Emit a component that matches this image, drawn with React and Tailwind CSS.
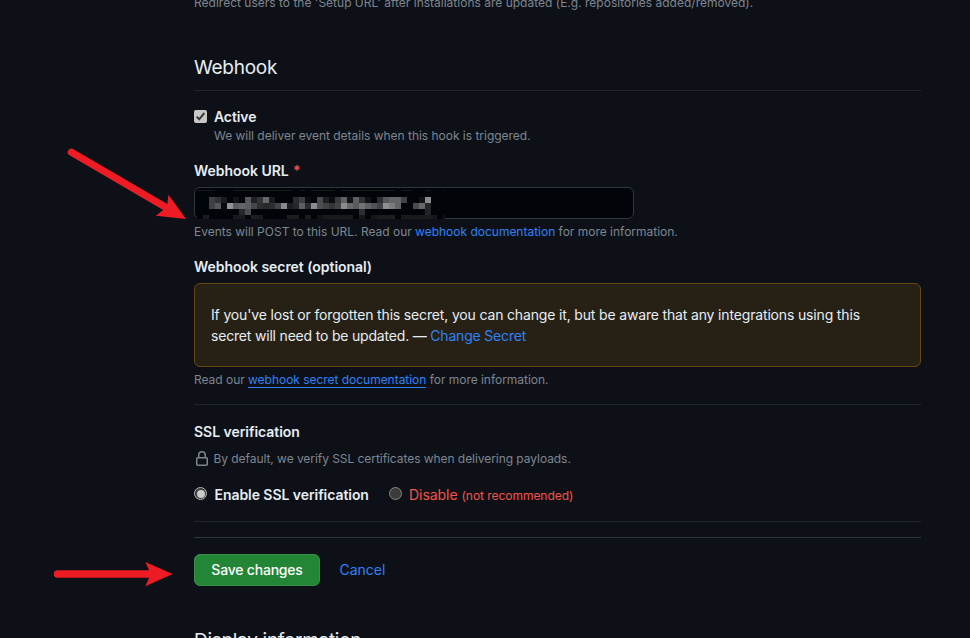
// Grey levels of the redacted URL, one row of 6px cells per entry.
const MOSAIC = [
  [0, 0, 61, 48, 26, 0, 17, 0, 87, 30, 50, 102, 26, 0, 0, 0, 41, 60, 12, 0, 72, 28, 12, 56, 96, 16, 92, 48, 16, 0, 44, 85, 98, 98, 64, 0, 0, 16, 138, 0, 0, 0],
  [0, 0, 64, 85, 8, 145, 91, 98, 92, 68, 44, 38, 44, 64, 136, 26, 36, 92, 42, 138, 76, 64, 51, 64, 138, 102, 88, 112, 96, 80, 64, 140, 122, 98, 0, 0, 72, 102, 37, 0, 0, 0],
  [0, 0, 0, 0, 0, 0, 0, 38, 74, 0, 0, 0, 0, 0, 0, 0, 0, 0, 0, 0, 0, 0, 0, 0, 0, 0, 0, 44, 0, 0, 0, 0, 0, 0, 0, 0, 0, 0, 34, 0, 0, 0],
  [0, 26, 0, 0, 0, 0, 24, 24, 0, 28, 26, 0, 0, 0, 0, 26, 26, 0, 26, 0, 16, 24, 24, 24, 24, 24, 0, 20, 0, 20, 26, 26, 28, 0, 24, 24, 24, 24, 26, 22, 0, 14],
];

// Faint row along the top of the redacted area.
const EDGE = [22, 22, 22, 0, 0, 0, 22, 22, 22, 22, 22, 22, 22, 22, 22, 22, 0, 22, 0, 22, 22, 22, 22, 0, 22, 22, 22, 22, 22, 22, 22, 22, 22, 0, 22, 22, 0, 0, 22, 0, 0, 14];

const shade = (v) => (v ? `rgb(${v}, ${v + 2}, ${v + 6})` : '#010409');

function Redacted() {
  return (
    <div className="ml-[2px] mt-[2px] h-[29px] w-[248px] overflow-hidden">
      <div className="mb-[6px] grid auto-rows-[1px] grid-cols-[repeat(42,6px)]">
        {EDGE.map((v, i) => (
          <div key={i} style={{ backgroundColor: shade(v) }} />
        ))}
      </div>
      <div className="grid auto-rows-[6px] grid-cols-[repeat(42,6px)]">
        {MOSAIC.flat().map((v, i) => (
          <div key={i} style={{ backgroundColor: shade(v) }} />
        ))}
      </div>
    </div>
  );
}

function Rule({ className }) {
  return <div className={`h-px bg-[#21262d] ${className}`} />;
}

export default function App() {
  return (
    <div className="relative h-[638px] w-[970px] overflow-hidden bg-[#0d1117] font-['Inter',sans-serif] text-[14px] tracking-[-0.04px] text-[#e6edf3]">
      <main className="flex w-[921px] flex-col pl-[194px]">
        <p className="-mt-[6px] h-[18px] whitespace-nowrap text-[12px] leading-[18px] tracking-[0.005px] text-[#7d8590]">
          Redirect users to the 'Setup URL' after installations are updated (E.g. repositories added/removed).
        </p>

        <h2 className="mt-[41px] h-[30px] text-[19px] leading-[30px] tracking-[-0.25px]">Webhook</h2>
        <Rule className="mt-[7px]" />

        <div className="mt-[16px] flex h-[20px] items-center">
          <span className="mb-[2px] mr-[7px] flex h-[13px] w-[13px] items-center justify-center rounded-[2px] bg-[#c8c8c8]">
            <svg width="13" height="13" viewBox="0 0 13 13" fill="none">
              <path d="M2.7 6.8 5.2 9.3 10.3 3" stroke="#3b3b3b" strokeWidth="2" />
            </svg>
          </span>
          <span className="font-semibold leading-[20px] tracking-[-0.1px]">Active</span>
        </div>
        <p className="ml-[20px] h-[18px] text-[12px] leading-[18px] tracking-[-0.02px] text-[#7d8590]">
          We will deliver event details when this hook is triggered.
        </p>

        <label className="mt-[16px] h-[20px] font-semibold leading-[20px]">
          Webhook URL <span className="ml-[1px] text-[#f85149]">*</span>
        </label>
        <div className="mt-[6px] h-[32px] w-[440px] rounded-[6px] border border-[#30363d] bg-[#010409]">
          <Redacted />
        </div>
        <p className="mt-[4px] h-[18px] text-[12px] leading-[18px] tracking-[-0.01px] text-[#7d8590]">
          Events will POST to this URL. Read our <a className="text-[#2f81f7]">webhook documentation</a> for more information.
        </p>

        <label className="mt-[16px] h-[20px] font-semibold leading-[20px]">Webhook secret (optional)</label>
        <div className="mt-[6px] h-[84px] whitespace-nowrap rounded-[6px] border border-[#634811] bg-[#272115] px-[16px] pt-[20px] leading-[21px] tracking-[-0.16px]">
          If you've lost or forgotten this secret, you can change it, but be aware that any integrations using this
          <br />
          <span className="tracking-[-0.19px]">
            secret will need to be updated. — <a className="text-[#2f81f7]">Change Secret</a>
          </span>
        </div>
        <p className="mt-[4px] h-[18px] text-[12px] leading-[18px] tracking-[-0.03px] text-[#7d8590]">
          Read our <a className="border-b border-[#2f81f7] text-[#2f81f7]">webhook secret documentation</a> for more information.
        </p>

        <Rule className="mt-[15px]" />
        <h3 className="mt-[17px] h-[20px] font-semibold leading-[20px]">SSL verification</h3>
        <div className="mt-[8px] flex h-[18px] items-center text-[12px] leading-[18px] tracking-[-0.055px] text-[#7d8590]">
          <svg className="mb-[1px] mr-[3.5px]" width="16" height="16" viewBox="0 0 16 16" fill="currentColor">
            <path d="M4 4a4 4 0 0 1 8 0v2h.25c.966 0 1.75.784 1.75 1.75v5.5A1.75 1.75 0 0 1 12.25 15h-8.5A1.75 1.75 0 0 1 2 13.25v-5.5C2 6.784 2.784 6 3.75 6H4Zm8.25 3.5h-8.5a.25.25 0 0 0-.25.25v5.5c0 .138.112.25.25.25h8.5a.25.25 0 0 0 .25-.25v-5.5a.25.25 0 0 0-.25-.25ZM10.5 6V4a2.5 2.5 0 1 0-5 0v2Z" />
          </svg>
          By default, we verify SSL certificates when delivering payloads.
        </div>

        <div className="mt-[17px] flex h-[20px] items-center leading-[20px]">
          <span className="mb-[3px] mr-[7.5px] flex h-[13px] w-[13px] items-center justify-center rounded-full border border-[#b5b5b5] bg-[#3b3b3b]">
            <span className="h-[8px] w-[8px] rounded-full bg-[#cbcbcb]" />
          </span>
          <span className="w-[174.5px] whitespace-nowrap font-semibold tracking-[-0.06px]">Enable SSL verification</span>
          <span className="mb-[3px] mr-[7px] h-[13px] w-[13px] rounded-full border border-[#858585] bg-[#3b3b3b]" />
          <span className="text-[#f85149]">
            Disable <span className="text-[12px]">(not recommended)</span>
          </span>
        </div>

        <Rule className="mt-[16px]" />
        <div className="mt-[15px] h-px bg-[#30363d]" />

        <div className="mt-[16px] flex h-[32px] items-center">
          <button className="h-[32px] w-[126px] whitespace-nowrap rounded-[6px] border border-[#37914a] bg-[#238636] pb-[2px] font-medium tracking-[-0.2px] text-white">
            Save changes
          </button>
          <a className="ml-[19.5px] pb-[2px] tracking-normal text-[#2f81f7]">Cancel</a>
        </div>

        <h2 className="mt-[40px] h-[30px] text-[19px] leading-[30px] tracking-[-0.3px]">Display information</h2>
      </main>

      <svg className="pointer-events-none absolute left-0 top-0" width="970" height="638" fill="#ed1c24">
        <path d="M72.6 148.7 167.3 204 168.4 194.8 186 219 155.7 215.7 163.2 210 69.1 155.1A3.7 3.7 0 0 1 72.6 148.7Z" />
        <path d="M57.5 570.3H149L145.3 562 172.7 574 145.3 586.2 149 577.8H57.5A3.75 3.75 0 0 1 57.5 570.3Z" />
      </svg>
    </div>
  );
}
